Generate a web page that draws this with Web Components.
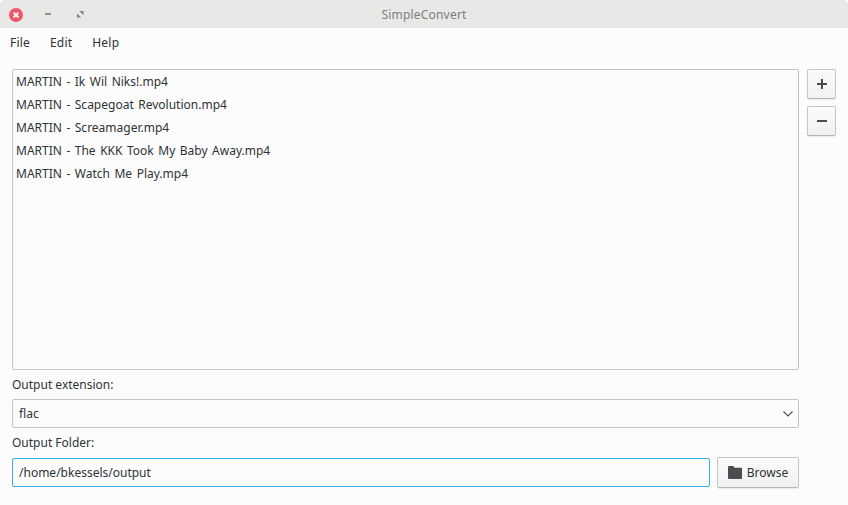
<!DOCTYPE html>
<html><head><meta charset="utf-8"><style>
html,body{margin:0;padding:0;height:100%;background:#fcfcfc}
body{font:12px "Noto Sans",sans-serif;color:#2e3436;overflow:hidden}
</style></head><body>
<app-window>
<title-bar slot="title">SimpleConvert</title-bar>
<menu-bar slot="menu"><span>File</span><span>Edit</span><span>Help</span></menu-bar>
<file-list slot="list">
<div>MARTIN - Ik Wil Niks!.mp4</div>
<div>MARTIN - Scapegoat Revolution.mp4</div>
<div>MARTIN - Screamager.mp4</div>
<div>MARTIN - The KKK Took My Baby Away.mp4</div>
<div>MARTIN - Watch Me Play.mp4</div>
</file-list>
<gtk-button slot="add"><svg width="12" height="12" viewBox="0 0 12 12"><path d="M5 1h2v4h4v2H7v4H5V7H1V5h4z" fill="#4a4d4e"/></svg></gtk-button>
<gtk-button slot="remove"><svg width="12" height="12" viewBox="0 0 12 12"><path d="M1 5h10v2H1z" fill="#4a4d4e"/></svg></gtk-button>
<form-row slot="form">
<field-label>Output extension:</field-label>
<combo-box>flac</combo-box>
<field-label>Output Folder:</field-label>
<div style="display:flex;gap:7px;align-items:center">
<text-entry style="flex:1">/home/bkessels/output</text-entry>
<gtk-button browse><svg width="14" height="13" viewBox="0 0 14 13"><path d="M0 1.2Q0 0 1 0H5.2L6.8 1.8H13Q14 1.8 14 2.8V12Q14 13 13 13H1Q0 13 0 12z" fill="#4a4d4e"/></svg><span>Browse</span></gtk-button>
</div>
</form-row>
</app-window>
<script>
function def(name, css, html){
  customElements.define(name, class extends HTMLElement{
    constructor(){super();this.attachShadow({mode:'open'}).innerHTML='<style>'+css+'</style>'+html;}
  });
}
def('app-window',`:host{display:block;width:848px;height:505px;background:#fcfcfc}
.main{display:grid;grid-template-columns:787px 29px;column-gap:8px;padding:12px 0 0 12px}
.side{display:flex;flex-direction:column;gap:7px}`,
`<slot name="title"></slot><slot name="menu"></slot>
<div class="main"><slot name="list"></slot><div class="side"><slot name="add"></slot><slot name="remove"></slot></div></div>
<div style="width:787px;padding-left:12px"><slot name="form"></slot></div>`);
def('title-bar',`:host{display:flex;position:relative;height:28px;background:#e8e8e7;align-items:center;justify-content:center;color:#7b7e80;font-size:12px;border-radius:5px 5px 0 0;box-sizing:border-box;letter-spacing:.2px}
.c{position:absolute;left:9px;top:8px}
.m{position:absolute;left:45px;top:13px;width:6px;height:2px;background:#8f9192}
.r{position:absolute;left:77px;top:11px}`,
`<svg class="c" width="14" height="14" viewBox="0 0 14 14"><circle cx="7" cy="7" r="7" fill="#f0576a"/><path d="M4.6 4.6l4.8 4.8M9.4 4.6l-4.8 4.8" stroke="#fff" stroke-width="2"/></svg><span class="m"></span><svg class="r" width="7" height="7" viewBox="0 0 7 7"><path d="M2.2 0H6.5V4.3zM0 2.4L4.2 6.5H0z" fill="#808384"/></svg><slot></slot>`);
def('menu-bar',`:host{display:flex;height:29px;align-items:center;gap:20px;padding-left:10px;color:#2e3436;letter-spacing:.2px}
::slotted(span){display:block}`,`<slot></slot>`);
def('file-list',`:host{display:block;box-sizing:border-box;height:301px;border:1px solid #c4c6c6;border-radius:2px;background:#fcfcfc;padding:0 3px;word-spacing:1.4px}
::slotted(div){height:23px;line-height:23px}`,`<slot></slot>`);
def('gtk-button',`:host{display:inline-flex;box-sizing:border-box;height:30px;align-items:center;justify-content:center;gap:6px;border:1px solid #c4c6c6;border-bottom-color:#b5b7b7;border-radius:2px;background:linear-gradient(#fbfbfb,#f1f1f1);box-shadow:0 1px 1px rgba(0,0,0,.08)}
:host([browse]){width:82px;height:31px;gap:5px}`,`<slot></slot>`);
def('form-row',`:host{display:block}`,`<slot></slot>`);
def('field-label',`:host{display:block;height:29px;line-height:29px;color:#2e3436}`,`<slot></slot>`);
def('combo-box',`:host{display:flex;box-sizing:border-box;height:29px;align-items:center;justify-content:space-between;border:1px solid #c4c6c6;border-radius:2px;padding:0 5px 0 6px;background:#fcfcfc}`,
`<slot></slot><svg width="10" height="6" viewBox="0 0 10 6"><path d="M.5 .5L5 5 9.5 .5" fill="none" stroke="#4a4d4e" stroke-width="1.1"/></svg>`);
def('text-entry',`:host{display:flex;box-sizing:border-box;height:29px;align-items:center;border:1px solid #3daee9;border-radius:2px;padding:0 6px;background:#fcfcfc}`,`<slot></slot>`);
</script>
</body></html>
